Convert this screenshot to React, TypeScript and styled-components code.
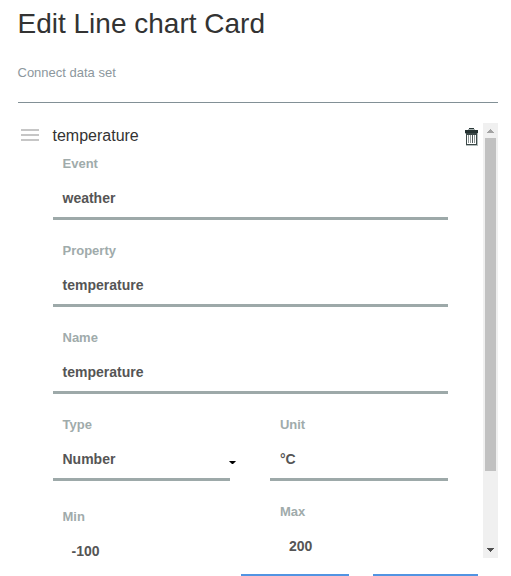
import React from "react";
import styled, { createGlobalStyle } from "styled-components";

const GlobalStyle = createGlobalStyle`
  * { box-sizing: border-box; }
  html, body { margin: 0; height: 100%; overflow: hidden; background: #fff; }
  body { font-family: "Liberation Sans", Arial, sans-serif; color: #333; }
`;

const Dialog = styled.main`
  display: flex;
  flex-direction: column;
  width: 511px;
  height: 576px;
  padding: 4px 13px 0 18px;
  overflow: hidden;
`;

const Title = styled.h1`
  margin: 0 0 0 -0.5px;
  font-size: 28px;
  line-height: 40px;
  font-weight: 400;
  color: #333;
`;

const Subtitle = styled.p`
  margin: 19px 0 0 -0.5px;
  font-size: 13px;
  line-height: 20px;
  color: #8c979d;
`;

const Divider = styled.hr`
  width: 100%;
  height: 1px;
  flex: none;
  margin: 19px 0 20px;
  border: 0;
  background: #829096;
`;

const Scroller = styled.section`
  display: flex;
  flex: none;
  height: 435px;
  overflow: hidden;
`;

const DataSet = styled.div`
  flex: 1;
  display: grid;
  grid-template-columns: 35px 1fr 35px;
  grid-template-rows: 30px auto;
`;

const DragHandle = styled.div`
  display: flex;
  flex-direction: column;
  gap: 3px;
  padding: 6px 0 0 3px;
`;

const HandleBar = styled.span`
  width: 18px;
  height: 2px;
  background: #c6c6c6;
`;

const DataSetName = styled.h2`
  margin: 0 0 0 -0.5px;
  font-size: 16px;
  line-height: 25px;
  font-weight: 400;
`;

const DeleteButton = styled.button`
  display: flex;
  align-items: flex-start;
  padding: 5px 0 0 17px;
  border: 0;
  background: none;
  svg { flex: none; display: block; }
`;

const Fields = styled.div`
  grid-column: 2;
  display: grid;
  grid-template-columns: 177px 178px;
  column-gap: 40px;
  align-content: start;
`;

const FullRow = styled.div`
  grid-column: 1 / -1;
`;

const Column = styled.div`
  min-width: 0;
`;

const FieldBox = styled.label<{ $gap: number; $inset: number }>`
  display: block;
  height: 67px;
  padding-left: ${(p) => p.$inset}px;
  margin-bottom: ${(p) => p.$gap}px;
  border-bottom: 3px solid #9da9a9;
`;

const FieldLabel = styled.span`
  display: block;
  font-size: 13px;
  line-height: 21px;
  font-weight: 700;
  color: #a0abab;
`;

const FieldValue = styled.span<{ $indent: boolean }>`
  display: flex;
  justify-content: space-between;
  padding: 14px 0 0 ${(p) => (p.$indent ? 9 : 0)}px;
  font-size: 14px;
  line-height: 20px;
  font-weight: 700;
  color: #555;
`;

const Caret = styled.svg`
  flex: none;
  margin: 12px -6px 0 0;
`;

const Scrollbar = styled.div`
  display: flex;
  flex-direction: column;
  align-items: center;
  width: 15px;
  padding: 6px 2px 5px;
  background: #f0f0f0;
`;

const Thumb = styled.div`
  width: 11px;
  height: 333px;
  margin: 5px 0 77px;
  flex: none;
  background: #c1c1c1;
`;

const Arrow = styled.svg`
  flex: none;
  display: block;
`;

const Actions = styled.footer`
  display: flex;
  justify-content: flex-end;
  gap: 24px;
  margin-top: 16px;
  padding-right: 20px;
`;

const ActionButton = styled.button<{ $width: number }>`
  flex: none;
  width: ${(p) => p.$width}px;
  height: 36px;
  border: 0;
  background: #5294e2;
`;

type FieldProps = {
  label: string;
  value: string;
  select?: boolean;
  numeric?: boolean;
  inset?: number;
};

function Field({ label, value, select = false, numeric = false, inset = 9.5 }: FieldProps) {
  return (
    <FieldBox $gap={select ? 25 : 20} $inset={inset}>
      <FieldLabel>{label}</FieldLabel>
      <FieldValue $indent={numeric}>
        {value}
        {select && (
          <Caret width="7" height="4" viewBox="0 0 7 4">
            <path d="M0.3 0h6.4v0.6L4 3h-1L0.3 0.6z" fill="#000" />
          </Caret>
        )}
      </FieldValue>
    </FieldBox>
  );
}

function TrashIcon() {
  return (
    <svg width="13" height="18" viewBox="0 0 13 18" shapeRendering="crispEdges">
      <path d="M4 0h5v1H4z" fill="#2b3838" />
      <path d="M3 1h7v1H3z" fill="#a5afae" />
      <path d="M0 2h13v3H0z" fill="#263332" />
      <path d="M0 5h1v1H0zM12 5h1v1h-1z" fill="#b5bebd" />
      <path d="M1 5h11v12H1z" fill="#3b4847" />
      <path d="M2 7h9v9H2z" fill="#fff" />
      <path d="M3 7h1v8H3zM5 7h1v8H5zM9 7h1v8H9z" fill="#8e9796" />
      <path d="M7 7h1v8H7z" fill="#4d5857" />
      <path d="M1 17h11v1H1zM12 6h1v12h-1z" fill="#b5bebd" />
    </svg>
  );
}

export default function App() {
  return (
    <>
      <GlobalStyle />
      <Dialog>
        <Title>Edit Line chart Card</Title>
        <Subtitle>Connect data set</Subtitle>
        <Divider />
        <Scroller>
          <DataSet>
            <DragHandle>
              <HandleBar />
              <HandleBar />
              <HandleBar />
            </DragHandle>
            <DataSetName>temperature</DataSetName>
            <DeleteButton aria-label="Delete">
              <TrashIcon />
            </DeleteButton>
            <Fields>
              <FullRow>
                <Field label="Event" value="weather" />
                <Field label="Property" value="temperature" />
                <Field label="Name" value="temperature" />
              </FullRow>
              <Column>
                <Field label="Type" value="Number" select />
                <Field label="Min" value="-100" numeric />
              </Column>
              <Column>
                <Field label="Unit" value="°C" inset={9.9} />
                <Field label="Max" value="200" numeric inset={9.9} />
              </Column>
            </Fields>
          </DataSet>
          <Scrollbar>
            <Arrow width="7" height="4" viewBox="0 0 7 4" shapeRendering="crispEdges">
              <path d="M3 0h1v1H3zM2 1h3v1H2zM1 2h5v1H1zM0 3h7v1H0z" fill="#a3a3a3" />
            </Arrow>
            <Thumb />
            <Arrow width="7" height="4" viewBox="0 0 7 4" shapeRendering="crispEdges">
              <path d="M0 0h7v1H0zM1 1h5v1H1zM2 2h3v1H2zM3 3h1v1H3z" fill="#505050" />
            </Arrow>
          </Scrollbar>
        </Scroller>
        <Actions>
          <ActionButton $width={108} aria-label="Cancel" />
          <ActionButton $width={105} aria-label="Save" />
        </Actions>
      </Dialog>
    </>
  );
}
